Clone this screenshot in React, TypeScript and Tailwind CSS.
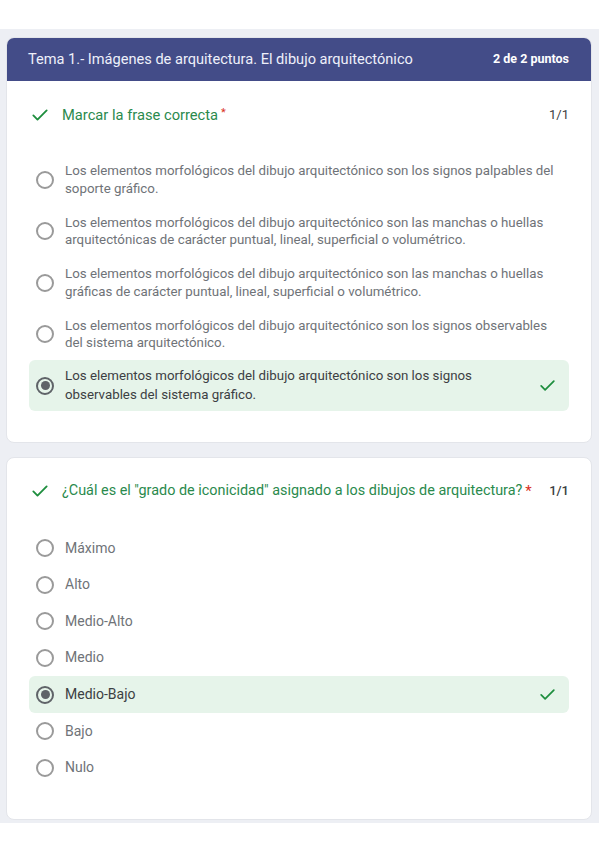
import React from "react";

const Check = ({ className = "" }: { className?: string }) => (
  <svg viewBox="0 0 24 24" className={className} fill="none" stroke="currentColor" strokeWidth={2.2} strokeLinecap="round" strokeLinejoin="round">
    <path d="M4 12.5l5 5L20 6.5" />
  </svg>
);

const Radio = ({ checked }: { checked?: boolean }) => (
  <div
    className={
      "flex h-[18px] w-[18px] shrink-0 items-center justify-center rounded-full border-2 " +
      (checked ? "border-[#5f6368]" : "border-[#9a9a9a]")
    }
  >
    {checked && <div className="h-[9px] w-[9px] rounded-full bg-[#5f6368]" />}
  </div>
);

const q1 = [
  "Los elementos morfológicos del dibujo arquitectónico son los signos palpables del soporte gráfico.",
  "Los elementos morfológicos del dibujo arquitectónico son las manchas o huellas arquitectónicas de carácter puntual, lineal, superficial o volumétrico.",
  "Los elementos morfológicos del dibujo arquitectónico son las manchas o huellas gráficas de carácter puntual, lineal, superficial o volumétrico.",
  "Los elementos morfológicos del dibujo arquitectónico son los signos observables del sistema arquitectónico.",
];

const q2 = ["Máximo", "Alto", "Medio-Alto", "Medio", "Medio-Bajo", "Bajo", "Nulo"];

export default function App() {
  return (
    <div className="h-[848px] w-[599px] bg-white font-['Roboto',sans-serif]">
      <div className="h-[29px]" />
      <div className="flex flex-col gap-[14px] bg-[#edeff4] pb-[3px] pl-[6px] pr-[7px] pt-[8px]">
        {/* Card 1 */}
        <div className="overflow-hidden rounded-[8px] border border-[#e3e5ea] bg-white">
          <div className="flex h-[43px] items-center justify-between bg-[#434c88] pl-[21px] pr-[22px] text-white">
            <span className="whitespace-nowrap text-[14.6px] text-[#eef0fa]">Tema 1.- Imágenes de arquitectura. El dibujo arquitectónico</span>
            <span className="text-[12.5px] font-bold">2 de 2 puntos</span>
          </div>
          <div className="px-[22px] pb-[31px] pt-[24px]">
            <div className="flex h-[20px] items-center">
              <Check className="ml-[1px] h-[20px] w-[20px] text-[#1e8e3e]" />
              <span className="ml-[12px] text-[14.7px] text-[#2a8a4d]">Marcar la frase correcta</span>
              <span className="ml-[3px] self-start text-[11px] text-[#d93025]">*</span>
              <span className="ml-auto text-[13px] text-[#3c4043]">1/1</span>
            </div>
            <div className="mt-[29px] flex flex-col">
              {q1.map((t) => (
                <div key={t} className="flex h-[51.5px] items-center pl-[7px] pr-[4px]">
                  <Radio />
                  <span className="ml-[11px] text-[13.3px] leading-[17.5px] text-[#6f7378]">{t}</span>
                </div>
              ))}
              <div className="flex h-[51px] items-center rounded-[6px] bg-[#e6f4ea] pl-[7px] pr-[12px]">
                <Radio checked />
                <span className="ml-[11px] w-[430px] text-[13.3px] leading-[18.5px] text-[#3c4043]">
                  Los elementos morfológicos del dibujo arquitectónico son los signos observables del sistema gráfico.
                </span>
                <Check className="ml-auto h-[19px] w-[19px] text-[#1e8e3e]" />
              </div>
            </div>
          </div>
        </div>

        {/* Card 2 */}
        <div className="rounded-[8px] border border-[#e3e5ea] bg-white">
          <div className="px-[22px] pb-[33px] pt-[23px]">
            <div className="flex h-[20px] items-center">
              <Check className="ml-[1px] h-[20px] w-[20px] shrink-0 text-[#1e8e3e]" />
              <span className="ml-[12px] whitespace-nowrap text-[14.4px] text-[#2a8a4d]">
                ¿Cuál es el "grado de iconicidad" asignado a los dibujos de arquitectura?
              </span>
              <span className="ml-[3px] text-[15px] text-[#d93025]">*</span>
              <span className="ml-auto text-[13px] font-medium text-[#3c4043]">1/1</span>
            </div>
            <div className="mt-[28.7px] flex flex-col">
              {q2.map((t) => {
                const sel = t === "Medio-Bajo";
                return (
                  <div
                    key={t}
                    className={
                      "flex h-[36.67px] items-center pl-[7px] pr-[12px] " + (sel ? "rounded-[6px] bg-[#e6f4ea]" : "")
                    }
                  >
                    <Radio checked={sel} />
                    <span className={"ml-[11px] text-[14px] " + (sel ? "text-[#3c4043]" : "text-[#6f7378]")}>{t}</span>
                    {sel && <Check className="ml-auto h-[19px] w-[19px] text-[#1e8e3e]" />}
                  </div>
                );
              })}
            </div>
          </div>
        </div>
      </div>
    </div>
  );
}
